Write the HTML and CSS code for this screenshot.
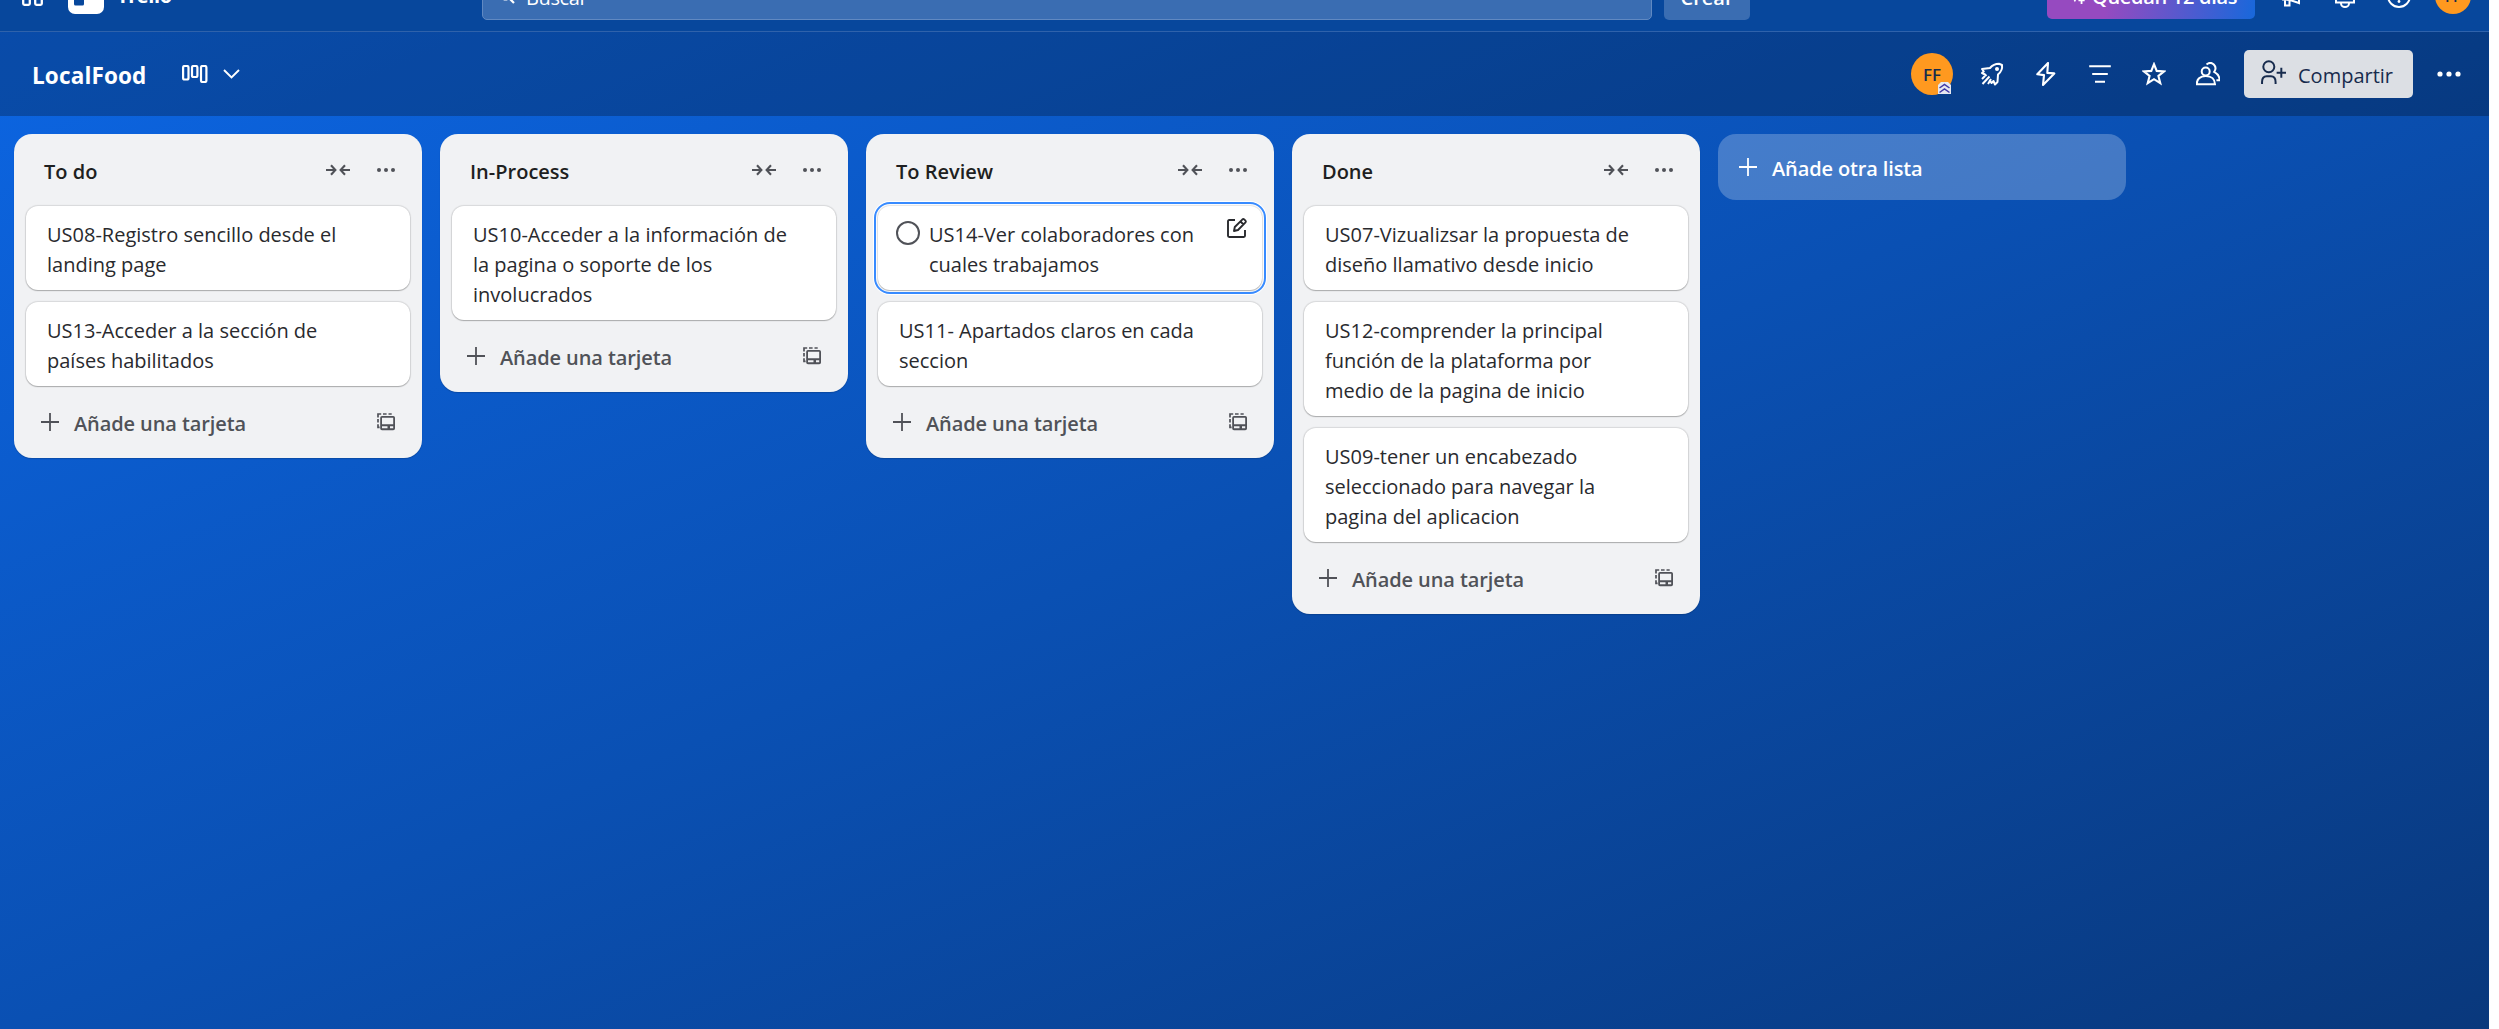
FILE: index.html
```html
<!DOCTYPE html>
<html lang="es">
<head>
<meta charset="utf-8">
<title>LocalFood | Trello</title>
<link rel="stylesheet" href="styles.css">
</head>
<body>
<svg class="defs" width="0" height="0">
  <symbol id="collapse" viewBox="0 0 24 12"><path d="M0 6h9M5 1.2 9.4 6 5 10.8M24 6h-9M19 1.2 14.6 6 19 10.8" fill="none" stroke="currentColor" stroke-width="2.1"/></symbol>
  <symbol id="dots" viewBox="0 0 24 24"><circle cx="5" cy="12" r="2"/><circle cx="12" cy="12" r="2"/><circle cx="19" cy="12" r="2"/></symbol>
  <symbol id="plus" viewBox="0 0 18 18"><path d="M9 0v18M0 9h18" fill="none" stroke="currentColor" stroke-width="1.8"/></symbol>
  <symbol id="template" viewBox="0 0 18 18"><path d="M1 4.500V1h3.200M6 1h3.600M11.500 1h3.200M1 6v3.600M1 11.300v3h1.600" fill="none" stroke="currentColor" stroke-width="1.700"/><path fill-rule="evenodd" d="M5 3h11.200q1.800 0 1.800 1.800v10.700q0 1.800-1.800 1.800H5q-1.800 0-1.800-1.800V4.800Q3.200 3 5 3zM5 4.800v6.400h11.200V4.800zM5 13.200v2h5.500v-2zM13 13.200v2h3.200v-2z"/></symbol>
</svg>
<div class="app">
  <header class="topbar">
    <svg class="apps" viewBox="0 0 21 21"><g fill="none" stroke="currentColor" stroke-width="2.300"><rect x="1.200" y="1.200" width="6.600" height="6.600" rx="1.200"/><rect x="13.200" y="1.200" width="6.600" height="6.600" rx="1.200"/><rect x="1.200" y="13.200" width="6.600" height="6.600" rx="1.200"/><rect x="13.200" y="13.200" width="6.600" height="6.600" rx="1.200"/></g></svg>
    <svg class="logo" viewBox="0 0 36 36"><rect width="36" height="36" rx="7" fill="#fff"/><rect x="6" y="7" width="10" height="20.500" rx="1.500" fill="#07479c"/><rect x="20" y="7" width="10" height="13" rx="1.500" fill="#07479c"/></svg>
    <span class="brand">Trello</span>
    <div class="search">
      <svg viewBox="0 0 16 16"><circle cx="6.500" cy="6.500" r="5" fill="none" stroke="currentColor" stroke-width="2"/><path d="m10 10 5 5" stroke="currentColor" stroke-width="2.200"/></svg>
      <span>Buscar</span>
    </div>
    <button class="create">Crear</button>
    <div class="trial">
      <svg viewBox="0 0 18 20"><path d="M2 9l3.500 7L9 9M13 12v8M9.500 16h7" stroke="currentColor" stroke-width="2" fill="none"/></svg>
      <span>Quedan 12 días</span>
    </div>
    <svg class="tool" viewBox="0 0 24 24"><path d="M4 8 20 3v16L11 16l-7-.5zM6 15.500v6h4.500V16" fill="none" stroke="currentColor" stroke-width="2"/></svg>
    <svg class="tool" viewBox="0 0 24 24"><path d="M3 16c2-2 2-4 2.500-7C6 5 8.500 3 12 3s6 2 6.500 6c.5 3 .5 5 2.500 7v2.500H3zM8 19.500a4 3.500 0 0 0 8 0" fill="none" stroke="currentColor" stroke-width="2"/></svg>
    <svg class="tool" viewBox="0 0 24 24"><circle cx="12" cy="12" r="11" fill="none" stroke="currentColor" stroke-width="2"/><path d="M9 9c0-4 6-4 6 0 0 2-3 2-3 5" fill="none" stroke="currentColor" stroke-width="2"/><circle cx="12" cy="17.500" r="1.400"/></svg>
    <span class="avatar small">FF</span>
  </header>

  <div class="boardbar">
    <h1>LocalFood</h1>
    <svg class="view" viewBox="0 0 26 18"><g fill="none" stroke="currentColor" stroke-width="2.200"><rect x="1.100" y="1" width="5.400" height="13.500" rx="1.500"/><rect x="10" y="1" width="5.400" height="11" rx="1.500"/><rect x="19" y="1" width="5.400" height="16" rx="1.500"/></g></svg>
    <svg class="chev" viewBox="0 0 17 10"><path d="m1 1 7.500 7.500L16 1" fill="none" stroke="currentColor" stroke-width="1.900"/></svg>
    <div class="actions">
      <span class="avatar">FF<svg class="badge" viewBox="0 0 13 12"><path d="M0 3 3 0h7l3 3v9H0z" fill="#e6e8f0"/><path d="m1.500 6 5-3.500 5 3.500M1.500 10.500l5-3.500 5 3.500" fill="none" stroke="#4038a8" stroke-width="1.500"/></svg></span>
      <svg class="ic" viewBox="0 0 24 24"><g fill="none" stroke="currentColor" stroke-width="2" stroke-linejoin="round"><path d="M6.500 14 5 12.500 2 11l1.800-1.500L2 7l8-1c2.500-3 5.500-4.200 9-4.200L22 3c.6 4-1 7-4 9.500L17.500 20 15 22.500 13.500 19 11.500 21 9.500 18"/><path d="m9.500 14.500-7 7.500M5 14l-3 3M11 17l-3 5"/></g><circle cx="17" cy="7" r="2"/></svg>
      <svg class="ic" viewBox="0 0 24 24"><path d="M14 1 3.300 12.300l6.700.8-1 9.800 11.300-11.500-7-.5z" fill="none" stroke="currentColor" stroke-width="2.100" stroke-linejoin="round"/></svg>
      <svg class="ic" viewBox="0 0 24 24"><path d="M1.200 4.200h21.600M4.200 12h15.600M7 19.800h10" stroke="currentColor" stroke-width="2.100"/></svg>
      <svg class="ic" viewBox="0 0 24 24"><path d="m12 2.200 2.700 6.700 7.400.5-5.700 4.600 1.900 7.200-6.300-4-6.300 4 1.900-7.200-5.700-4.600 7.400-.5z" fill="none" stroke="currentColor" stroke-width="2.100"/></svg>
      <svg class="ic" viewBox="0 0 24 24"><g fill="none" stroke="currentColor" stroke-width="2"><circle cx="9.700" cy="9.500" r="4"/><path d="M.7 22.300c0-5 3.300-8.300 9-8.300s9.300 3.300 9.300 8.300zM10.500 2.500C13 .4 16 .8 17.800 2.500c2 2 2 5 .4 7.300 3.600 2 5.400 5 5.400 8.400h-3.200"/></g></svg>
      <button class="share"><svg viewBox="0 0 24 24"><g fill="none" stroke="currentColor" stroke-width="1.900"><circle cx="7.500" cy="6.500" r="5.300"/><path d="M1 23v-2c0-4 2-5.500 4.500-5.500h4c2.500 0 4.500 1.500 4.500 5.500v2M19.500 7.500v9.500M15 12.300h9"/></g></svg><span>Compartir</span></button>
      <svg class="more" viewBox="0 0 24 8"><circle cx="3" cy="4" r="2.600"/><circle cx="12" cy="4" r="2.600"/><circle cx="21" cy="4" r="2.600"/></svg>
    </div>
  </div>

  <main class="board">
    <section class="list">
      <div class="list-head"><h2>To do</h2><svg class="collapse"><use href="#collapse"/></svg><svg class="dots"><use href="#dots"/></svg></div>
      <article class="card">US08-Registro sencillo desde el<br>landing page</article>
      <article class="card">US13-Acceder a la sección de<br>países habilitados</article>
      <div class="add"><svg class="plus"><use href="#plus"/></svg><span>Añade una tarjeta</span><svg class="tpl"><use href="#template"/></svg></div>
    </section>
    <section class="list">
      <div class="list-head"><h2>In-Process</h2><svg class="collapse"><use href="#collapse"/></svg><svg class="dots"><use href="#dots"/></svg></div>
      <article class="card">US10-Acceder a la información de<br>la pagina o soporte de los<br>involucrados</article>
      <div class="add"><svg class="plus"><use href="#plus"/></svg><span>Añade una tarjeta</span><svg class="tpl"><use href="#template"/></svg></div>
    </section>
    <section class="list">
      <div class="list-head"><h2>To Review</h2><svg class="collapse"><use href="#collapse"/></svg><svg class="dots"><use href="#dots"/></svg></div>
      <article class="card focused"><span class="check"></span><span>US14-Ver colaboradores con<br>cuales trabajamos</span>
        <svg class="edit" viewBox="0 0 20 20"><g fill="none" stroke="currentColor" stroke-width="1.900"><path d="M8 2H2.200Q1 2 1 3.200v14.600Q1 19 2.200 19h14.600q1.200 0 1.200-1.200V12"/><path d="m7 13 .8-4L15.500 1.300q.8-.6 1.600 0l1.400 1.400q.6.800 0 1.600L11 12zM13.500 3.500l3 3" stroke-linejoin="round"/></g></svg>
      </article>
      <article class="card">US11- Apartados claros en cada<br>seccion</article>
      <div class="add"><svg class="plus"><use href="#plus"/></svg><span>Añade una tarjeta</span><svg class="tpl"><use href="#template"/></svg></div>
    </section>
    <section class="list">
      <div class="list-head"><h2>Done</h2><svg class="collapse"><use href="#collapse"/></svg><svg class="dots"><use href="#dots"/></svg></div>
      <article class="card">US07-Vizualizsar la propuesta de<br>diseño llamativo desde inicio</article>
      <article class="card">US12-comprender la principal<br>función de la plataforma por<br>medio de la pagina de inicio</article>
      <article class="card">US09-tener un encabezado<br>seleccionado para navegar la<br>pagina del aplicacion</article>
      <div class="add"><svg class="plus"><use href="#plus"/></svg><span>Añade una tarjeta</span><svg class="tpl"><use href="#template"/></svg></div>
    </section>
    <button class="add-list"><svg class="plus"><use href="#plus"/></svg><span>Añade otra lista</span></button>
  </main>
</div>
</body>
</html>
```
FILE: styles.css
```css
* { box-sizing: border-box; }
body { margin: 0; background: #fff; font-family: "Open Sans", "Noto Sans", sans-serif; font-size: 20px; overflow: hidden; }
svg { display: block; flex: none; fill: currentColor; }
h1, h2 { margin: 0; }
button { border: 0; font: inherit; color: inherit; }
.defs { position: absolute; }
.app { width: 2489px; height: 1029px; overflow: hidden; display: flex; flex-direction: column; background: linear-gradient(to bottom right, #0c66e4, #0a50b3 50%, #09387c); }

.topbar { flex: none; height: 72px; margin-top: -40px; display: flex; align-items: center; color: #fff; background: #07479c; border-bottom: 1px solid #2f62ab; font-weight: 600; padding: 0 18px 0 22px; }
.apps { width: 21px; height: 21px; }
.logo { width: 36px; height: 36px; margin: 1px 0 0 25px; }
.brand { margin-left: 13px; width: 365px; font-weight: 700; letter-spacing: -.4px; }
.search { width: 1170px; height: 48px; display: flex; align-items: center; gap: 11px; padding-left: 16px; background: #3a6db2; border: 1px solid #6089c2; border-radius: 5px; font-weight: 400; }
.search span, .trial span { padding-top: 3px; }
.search span { letter-spacing: -.4px; }
.search svg { width: 16px; height: 16px; }
.create { width: 86px; height: 48px; margin-left: 12px; padding: 3px 0 0; background: #3a6db2; border-radius: 5px; font-weight: 600; }
.trial { width: 208px; height: 48px; margin: 0 24px 2px 297px; display: flex; align-items: center; gap: 6px; padding-left: 23px; border-radius: 5px; background: linear-gradient(100deg, #964ac0 30%, #1868db); white-space: nowrap; letter-spacing: -.3px; }
.trial svg { width: 16px; height: 20px; }
.tool { width: 24px; height: 24px; margin-right: 30px; }
.avatar { position: relative; flex: none; width: 42px; height: 42px; border-radius: 50%; background: #ff991f; color: #172b4d; display: grid; place-items: center; font-size: 17px; font-weight: 650; }
.avatar.small { width: 36px; height: 36px; font-size: 15px; margin-left: -6px; }
.badge { position: absolute; right: 2px; bottom: 1px; width: 13px; height: 12px; }

.boardbar { flex: none; height: 84px; display: flex; align-items: center; padding-left: 32px; color: #fff; background: rgba(0, 0, 0, .25); }
h1 { font-size: 22.500px; font-weight: 700; width: 150px; padding-top: 2px; letter-spacing: .15px; }
.view { width: 26px; height: 18px; }
.chev { width: 17px; height: 10px; margin-left: 15px; }
.actions { margin-left: auto; display: flex; align-items: center; padding-right: 28px; }
.actions .avatar { margin-right: 27px; }
.ic { width: 24px; height: 24px; margin-right: 30px; }
.share { width: 169px; height: 48px; margin-left: -6px; padding: 0 0 0 17px; display: flex; align-items: center; gap: 12px; border-radius: 5px; background: #dcdfe4; color: #172b4d; font-weight: 530; }
.share span { padding-top: 2px; }
.share svg { width: 25px; height: 25px; margin-top: -3px; }
.more { width: 24px; height: 8px; margin-left: 24px; }

.board { display: flex; align-items: flex-start; gap: 18px; padding: 18px 14px; }
.list { width: 408px; padding: 0 12px; border-radius: 18px; background: #f1f2f4; box-shadow: 0 1px 1px rgba(9, 30, 66, .25); color: #292a2e; }
.list-head { height: 72px; display: flex; align-items: center; padding: 0 12px 0 18px; color: #505258; }
h2 { flex: 1; font-size: 20px; font-weight: 540; color: #1e1f21; padding-top: 3px; }
.collapse { width: 24px; height: 12px; }
.dots { width: 24px; height: 24px; margin-left: 24px; }
.card { display: block; min-height: 84px; margin-bottom: 12px; padding: 14px 20px 10px 21px; border-radius: 12px; background: #fff; box-shadow: 0 1px 1px rgba(30, 31, 33, .25), 0 0 1px 1px rgba(30, 31, 33, .12); line-height: 30px; white-space: nowrap; }
.card.focused { display: flex; padding-left: 18px; outline: 2px solid #388bff; outline-offset: 2px; box-shadow: 0 1px 1px rgba(30, 31, 33, .25), 0 0 1px 1px rgba(30, 31, 33, .12), 0 0 0 5px #fff; }
.check { width: 24px; height: 24px; margin: 1px 9px 0 0; border: 2px solid #505258; border-radius: 50%; }
.edit { width: 20px; height: 20px; margin: -2px -5px 0 auto; }
.add { height: 72px; margin-top: -12px; display: flex; align-items: center; padding: 0 15px; color: #505258; font-weight: 560; letter-spacing: -.1px; }
.add span { margin-left: 15px; flex: 1; padding-top: 2px; }
.plus, .tpl { width: 18px; height: 18px; }
.add-list { width: 408px; height: 66px; padding: 0 0 0 21px; display: flex; align-items: center; gap: 15px; border-radius: 18px; background: rgba(255, 255, 255, .24); color: #fff; font-weight: 600; letter-spacing: -.13px; }
.add-list span { padding-top: 2px; }
```
